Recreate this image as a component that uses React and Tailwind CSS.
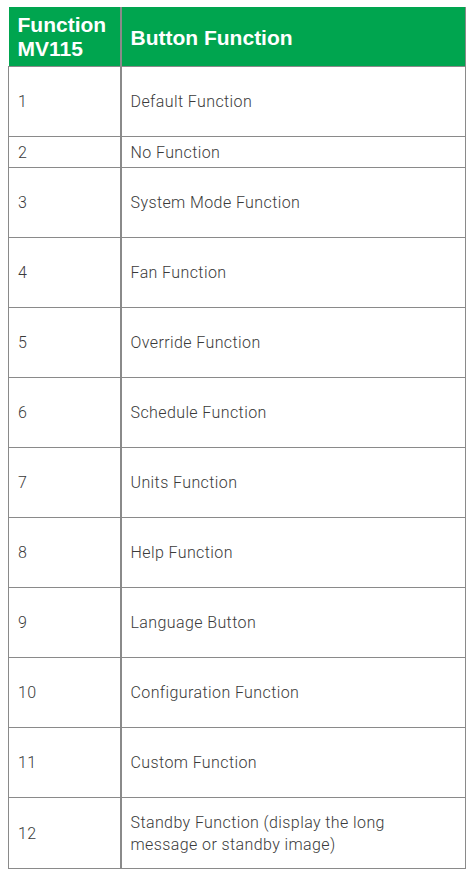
import React from 'react'

const rows = [
  ['1', 'Default Function', 'h-[70px]'],
  ['2', 'No Function', 'h-[31px]'],
  ['3', 'System Mode Function', 'h-[70px]'],
  ['4', 'Fan Function', 'h-[70px]'],
  ['5', 'Override Function', 'h-[70px]'],
  ['6', 'Schedule Function', 'h-[70px]'],
  ['7', 'Units Function', 'h-[70px]'],
  ['8', 'Help Function', 'h-[70px]'],
  ['9', 'Language Button', 'h-[70px]'],
  ['10', 'Configuration Function', 'h-[70px]'],
  ['11', 'Custom Function', 'h-[70px]'],
  ['12', 'Standby Function (display the long message or standby image)', 'h-[71px]'],
]

export default function App() {
  return (
    <div className="min-h-screen bg-white pt-[7px] pl-[8px]">
      <table className="w-[458px] border-collapse table-fixed font-['Liberation_Sans',Arial,sans-serif]">
        <colgroup>
          <col className="w-[112px]" />
          <col />
        </colgroup>
        <thead>
          <tr className="h-[59px] bg-[#00a54f] text-white">
            <th className="text-left align-middle pl-[9px] pt-[2px] text-[21px] leading-[24px] font-bold border-r-2 border-[#8a8a8a]">
              Function<br />MV115
            </th>
            <th className="text-left align-middle pl-[9px] pt-[2px] text-[21px] font-bold border-r border-[#8a8a8a]">
              Button Function
            </th>
          </tr>
        </thead>
        <tbody className="text-[#3a3a3a] text-[16px] tracking-[0.4px] font-['Roboto',sans-serif] font-light">
          {rows.map(([n, label, h]) => (
            <tr key={n} className={h}>
              <td className="border border-[#8a8a8a] border-r-2 pl-[9px] pt-[2px] align-middle">{n}</td>
              <td className="border border-[#8a8a8a] pl-[9px] pr-[40px] pt-[2px] align-middle leading-[22px]">{label}</td>
            </tr>
          ))}
        </tbody>
      </table>
    </div>
  )
}
